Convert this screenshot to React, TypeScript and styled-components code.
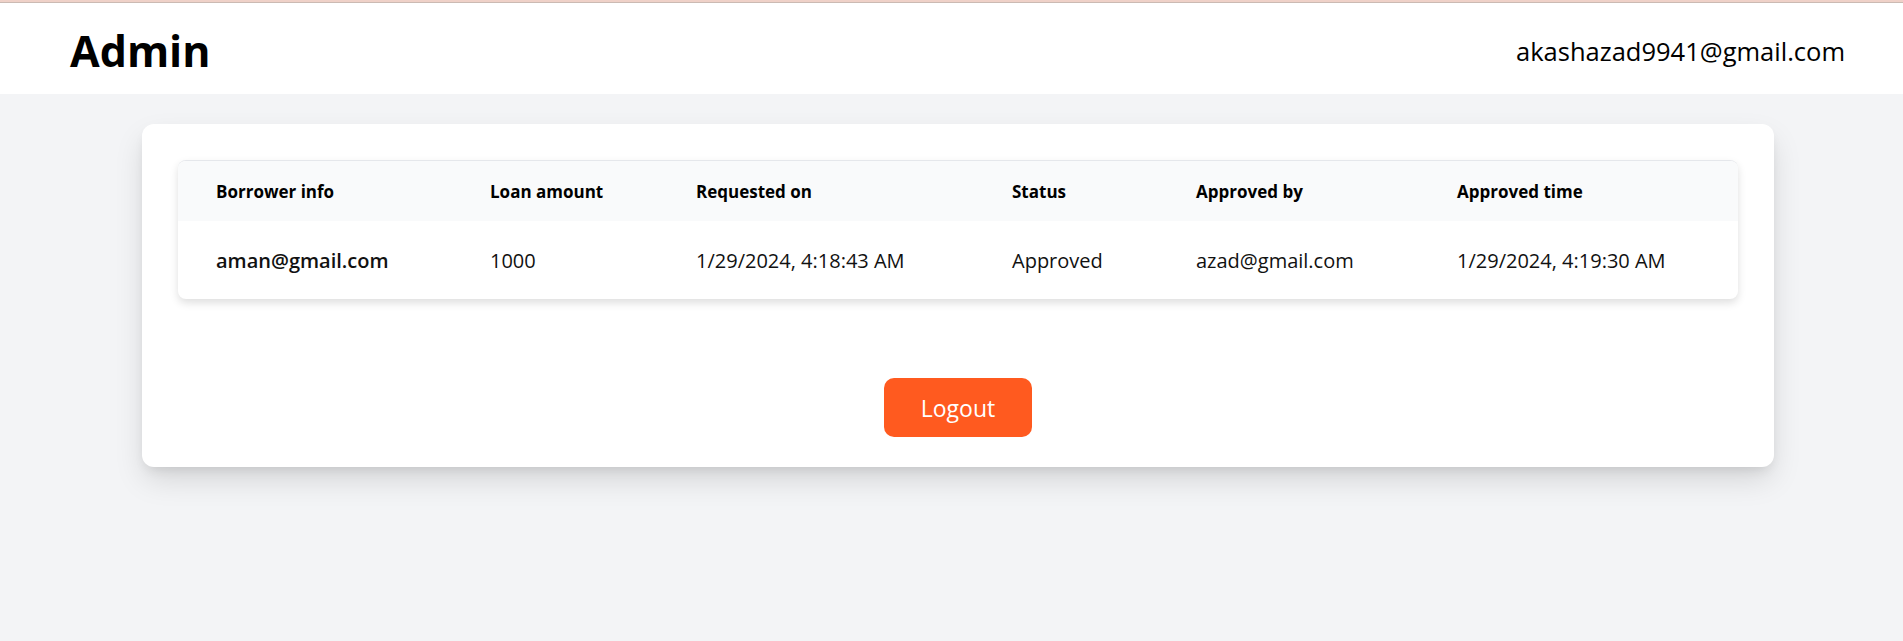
import React from "react";
import styled, { createGlobalStyle } from "styled-components";

const GlobalStyle = createGlobalStyle`
  body {
    margin: 0;
    background-color: #f3f4f6;
    font-family: "Open Sans", "Noto Sans", sans-serif;
    color: #000;
  }
`;

const Page = styled.div`
  min-height: 100vh;
  background-color: #f3f4f6;
`;

const Header = styled.header`
  height: 94px;
  box-sizing: border-box;
  display: flex;
  justify-content: space-between;
  align-items: center;
  padding: 3px 58px 0 70px;
  background: linear-gradient(
    to bottom,
    #efd1c8 0,
    #efd1c8 2px,
    #cbbab3 2px,
    #cbbab3 3px,
    #ffffff 3px
  );
`;

const Title = styled.h1`
  margin: 0;
  font-size: 43px;
  font-weight: 700;
  line-height: 1;
  padding-top: 4px;
`;

const UserEmail = styled.div`
  font-size: 25.5px;
  line-height: 1;
  padding-top: 6px;
`;

const Main = styled.main`
  padding: 30px 129px 80px 142px;
`;

const Card = styled.section`
  background: #fff;
  border-radius: 12px;
  padding: 36px 36px 30px;
  box-shadow: 0 14px 30px -2px rgba(0, 0, 0, 0.13),
    0 6px 12px -4px rgba(0, 0, 0, 0.1);
`;

const TableWrap = styled.div`
  border-radius: 8px;
  overflow: hidden;
  border-top: 1px solid #e5e7eb;
  box-shadow: 0 4px 8px rgba(0, 0, 0, 0.13);
`;

const Table = styled.table`
  width: 100%;
  border-collapse: collapse;
  table-layout: fixed;
`;

const HeadCell = styled.th`
  height: 60px;
  padding: 0 0 0 38px;
  text-align: left;
  font-size: 17px;
  font-weight: 700;
  background: #f9fafb;
  white-space: nowrap;
`;

const Cell = styled.td<{ $strong?: boolean }>`
  height: 78px;
  padding: 0 0 0 38px;
  font-size: 20px;
  font-weight: ${(p) => (p.$strong ? 600 : 400)};
  color: #111;
  white-space: nowrap;
`;

const Actions = styled.div`
  display: flex;
  justify-content: center;
  margin-top: 79px;
`;

const LogoutButton = styled.button`
  width: 148px;
  height: 59px;
  border: none;
  border-radius: 10px;
  background: #ff5a1f;
  color: #fff;
  font-family: inherit;
  font-size: 23px;
  cursor: pointer;
`;

const columns = [
  { label: "Borrower info", width: 274 },
  { label: "Loan amount", width: 206 },
  { label: "Requested on", width: 316 },
  { label: "Status", width: 184 },
  { label: "Approved by", width: 261 },
  { label: "Approved time", width: 319 },
];

const loans = [
  {
    borrower: "aman@gmail.com",
    amount: 1000,
    requested: "1/29/2024, 4:18:43 AM",
    status: "Approved",
    approvedBy: "azad@gmail.com",
    approvedAt: "1/29/2024, 4:19:30 AM",
  },
];

export default function App() {
  return (
    <Page>
      <GlobalStyle />
      <Header>
        <Title>Admin</Title>
        <UserEmail>akashazad9941@gmail.com</UserEmail>
      </Header>
      <Main>
        <Card>
          <TableWrap>
            <Table>
              <colgroup>
                {columns.map((c) => (
                  <col key={c.label} style={{ width: c.width }} />
                ))}
              </colgroup>
              <thead>
                <tr>
                  {columns.map((c) => (
                    <HeadCell key={c.label}>{c.label}</HeadCell>
                  ))}
                </tr>
              </thead>
              <tbody>
                {loans.map((l) => (
                  <tr key={l.borrower + l.requested}>
                    <Cell $strong>{l.borrower}</Cell>
                    <Cell>{l.amount}</Cell>
                    <Cell>{l.requested}</Cell>
                    <Cell>{l.status}</Cell>
                    <Cell>{l.approvedBy}</Cell>
                    <Cell>{l.approvedAt}</Cell>
                  </tr>
                ))}
              </tbody>
            </Table>
          </TableWrap>
          <Actions>
            <LogoutButton>Logout</LogoutButton>
          </Actions>
        </Card>
      </Main>
    </Page>
  );
}
